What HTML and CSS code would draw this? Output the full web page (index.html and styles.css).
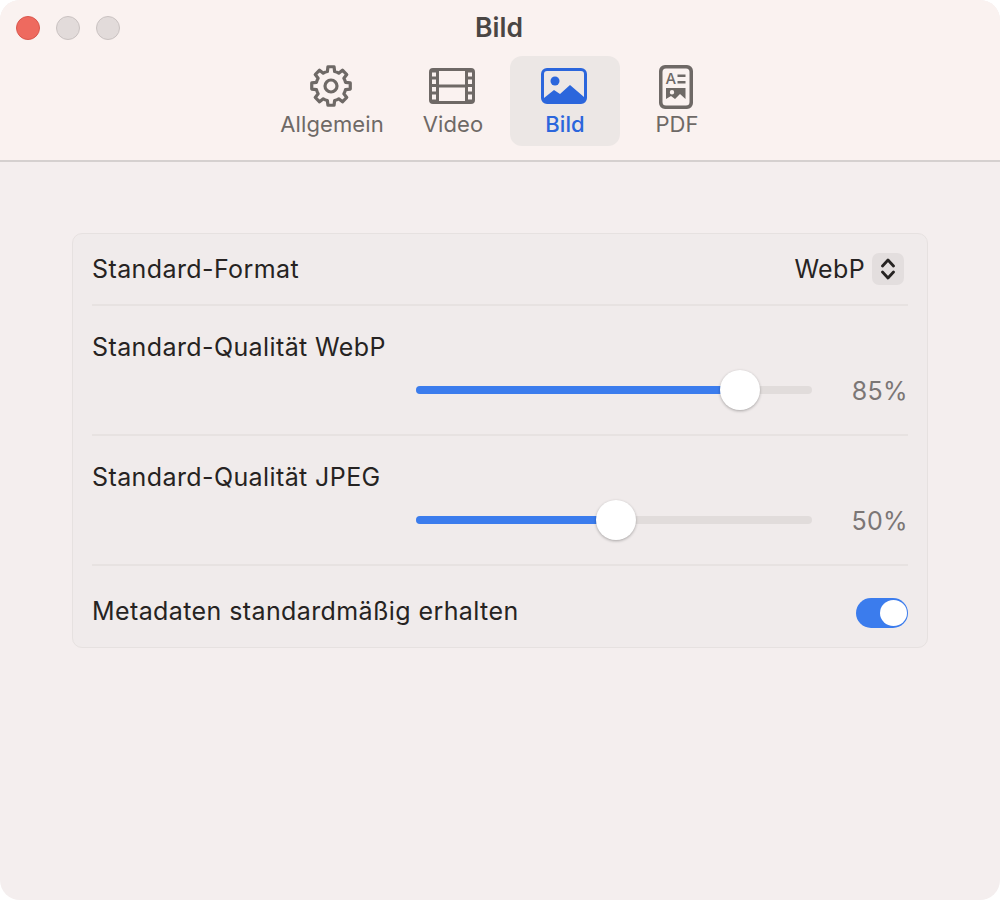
FILE: index.html
```html
<!DOCTYPE html>
<html lang="de">
<head>
    <meta charset="UTF-8">
    <meta name="viewport" content="width=device-width, initial-scale=1.0">
    <title>Bild</title>
    <link rel="stylesheet" href="styles.css">
</head>
<body>
    <div class="window">
        <header class="toolbar">
            <div class="traffic-lights">
                <span class="light light-close"></span>
                <span class="light"></span>
                <span class="light"></span>
            </div>
            <div class="window-title">Bild</div>
            <nav class="tabs">
                <div class="tab tab-general">
                    <svg class="tab-icon gear-icon" width="42" height="42" viewBox="0 0 42 42" fill="none" stroke="currentColor" stroke-width="3.200" stroke-linejoin="round">
                        <path d="M17.37 6.45L17.95 1.74L24.05 1.74L24.63 6.45A15 15 0 0 1 28.73 8.14L32.46 5.22L36.78 9.54L33.86 13.27A15 15 0 0 1 35.55 17.37L40.26 17.95L40.26 24.05L35.55 24.63A15 15 0 0 1 33.86 28.73L36.78 32.46L32.46 36.78L28.73 33.86A15 15 0 0 1 24.63 35.55L24.05 40.26L17.95 40.26L17.37 35.55A15 15 0 0 1 13.27 33.86L9.54 36.78L5.22 32.46L8.14 28.73A15 15 0 0 1 6.45 24.63L1.74 24.05L1.74 17.95L6.45 17.37A15 15 0 0 1 8.14 13.27L5.22 9.54L9.54 5.22L13.27 8.14A15 15 0 0 1 17.37 6.45Z"/>
                        <circle cx="21" cy="21" r="6"/>
                    </svg>
                    <span>Allgemein</span>
                </div>
                <div class="tab tab-video">
                    <svg class="tab-icon" width="46" height="44" viewBox="0 0 46 44" fill="currentColor">
                        <path fill-rule="evenodd" d="M4 3H42A4 4 0 0 1 46 7V35A4 4 0 0 1 42 39H4A4 4 0 0 1 0 35V7A4 4 0 0 1 4 3ZM10 6V19.500H36V6ZM10 22.500V36H36V22.500ZM3 7.500V11.500H7V7.500ZM3 14.500V19H7V14.500ZM3 22V26.500H7V22ZM3 29.500V34.500H7V29.500ZM39 7.500V11.500H43V7.500ZM39 14.500V19H43V14.500ZM39 22V26.500H43V22ZM39 29.500V34.500H43V29.500Z"/>
                    </svg>
                    <span>Video</span>
                </div>
                <div class="tab tab-active">
                    <svg class="tab-icon" width="46" height="44" viewBox="0 0 46 44" fill="currentColor">
                        <path fill-rule="evenodd" d="M6 3H40A6 6 0 0 1 46 9V33A6 6 0 0 1 40 39H6A6 6 0 0 1 0 33V9A6 6 0 0 1 6 3ZM6 6A3 3 0 0 0 3 9V33L13 25L19 29L29 20L43 32V9A3 3 0 0 0 40 6Z"/>
                        <circle cx="14" cy="16" r="4.500"/>
                    </svg>
                    <span>Bild</span>
                </div>
                <div class="tab tab-pdf">
                    <svg class="tab-icon" width="34" height="44" viewBox="0 0 34 44" fill="currentColor">
                        <path fill-rule="evenodd" d="M6 0H28A6 6 0 0 1 34 6V38A6 6 0 0 1 28 44H6A6 6 0 0 1 0 38V6A6 6 0 0 1 6 0ZM7 3.500A3.500 3.500 0 0 0 3.500 7V37A3.500 3.500 0 0 0 7 40.500H27A3.500 3.500 0 0 0 30.500 37V7A3.500 3.500 0 0 0 27 3.500Z"/>
                        <text x="6.500" y="19" class="pdf-letter">A</text>
                        <rect x="18.500" y="9.500" width="8" height="2.500"/>
                        <rect x="18.500" y="16" width="8" height="2.500"/>
                        <path fill-rule="evenodd" d="M7 23H26.500V34L21 29L16 34L12 31L7 34ZM13 25A2.200 2.200 0 1 0 13 29.400A2.200 2.200 0 1 0 13 25Z"/>
                    </svg>
                    <span>PDF</span>
                </div>
            </nav>
        </header>

        <main class="content">
            <section class="card">
                <div class="row row-simple row-format">
                    <span class="row-label">Standard-Format</span>
                    <div class="select">
                        <span>WebP</span>
                        <span class="select-stepper">
                            <svg width="14" height="24" viewBox="0 0 14 24" fill="none" stroke="currentColor" stroke-width="2.800" stroke-linecap="round" stroke-linejoin="round">
                                <path d="M1.500 9L7 3L12.500 9"/>
                                <path d="M1.500 15L7 21L12.500 15"/>
                            </svg>
                        </span>
                    </div>
                </div>
                <div class="row row-slider">
                    <span class="row-label">Standard-Qualität WebP</span>
                    <div class="slider-line">
                        <div class="slider">
                            <div class="slider-fill" style="width: 81.800%"></div>
                            <div class="slider-thumb" style="left: 81.800%"></div>
                        </div>
                        <span class="slider-value">85%</span>
                    </div>
                </div>
                <div class="row row-slider">
                    <span class="row-label">Standard-Qualität JPEG</span>
                    <div class="slider-line">
                        <div class="slider">
                            <div class="slider-fill" style="width: 50.500%"></div>
                            <div class="slider-thumb" style="left: 50.500%"></div>
                        </div>
                        <span class="slider-value">50%</span>
                    </div>
                </div>
                <div class="row row-simple row-last">
                    <span class="row-label">Metadaten standardmäßig erhalten</span>
                    <div class="toggle"><span class="toggle-knob"></span></div>
                </div>
            </section>
        </main>
    </div>
</body>
</html>
```

FILE: styles.css
```css
* { box-sizing: border-box; }
html, body { margin: 0; padding: 0; background: #fff; }
body { font-family: Inter, "Noto Sans", "Liberation Sans", sans-serif; color: #262322; }

.window { width: 1000px; height: 900px; display: flex; flex-direction: column; background: #f4eeee; border-radius: 20px; overflow: hidden; }

.toolbar { height: 162px; flex: none; position: relative; background: #faf2f0; border-bottom: 2px solid #d5d0cf; padding-top: 56px; }
.traffic-lights { position: absolute; top: 16px; left: 16px; display: flex; gap: 16px; }
.light { width: 24px; height: 24px; border-radius: 50%; background: #e2dbda; border: 1px solid #c9c2c1; }
.light-close { background: #ee6a5f; border-color: #d9574d; }
.window-title { position: absolute; top: 12px; left: 0; right: 2px; text-align: center; font-size: 26.500px; line-height: 30px; font-weight: 600; color: #4a4644; }

.tabs { display: flex; justify-content: center; padding-left: 2px; }
.tab { width: 110px; height: 90px; display: flex; flex-direction: column; align-items: center; border-radius: 12px; color: #6e6966; font-size: 22px; line-height: 26px; letter-spacing: 0.1px; padding-top: 9px; }
.tab-icon { height: 44px; margin: 0 2px 2px 0; flex: none; }
.gear-icon { height: 42px; margin-bottom: 4px; }
.tab span { white-space: nowrap; }
.tab-general { width: 128px; }
.tab-video { width: 114px; }
.tab-active { background: #ece7e5; color: #2b66dc; font-weight: 500; }
.tab-pdf { width: 114px; }
.pdf-letter { font-size: 15px; font-weight: 500; }

.content { padding: 71px 72px 0; }
.card { background: #f0ebeb; border: 1px solid #e6e1e0; border-radius: 10px; padding: 0 19px; }
.row { border-bottom: 2px solid #e7e2e1; }
.row-label { font-size: 25px; line-height: 30px; letter-spacing: 0.4px; color: #262322; }
.row-simple { display: flex; align-items: center; justify-content: space-between; }
.row-format { height: 72px; }
.row-last { height: 81px; border-bottom: none; padding-top: 8px; }
.row-slider { height: 130px; padding-top: 26px; }
.row-slider .row-label { display: block; }

.select { display: flex; align-items: center; gap: 7px; font-size: 25px; letter-spacing: 0.35px; margin-right: 4px; }
.select-stepper { width: 32px; height: 32px; display: flex; align-items: center; justify-content: center; background: #e3dede; border-radius: 7px; }

.slider-line { display: flex; align-items: center; justify-content: flex-end; margin-top: 13px; height: 30px; }
.slider { width: 396px; height: 8px; position: relative; background: #e1dcdb; border-radius: 4px; }
.slider-fill { height: 100%; background: #3b7ced; border-radius: 4px 0 0 4px; }
.slider-thumb { position: absolute; top: -16px; width: 40px; height: 40px; margin-left: -20px; background: #fff; border-radius: 50%; box-shadow: 0 1px 3px rgba(0, 0, 0, 0.3); }
.slider-value { width: 96px; padding-top: 1px; text-align: right; font-size: 25px; letter-spacing: 0.35px; color: #7b7675; }

.toggle { width: 52px; height: 30px; margin-top: 4px; background: #3b7ced; border-radius: 15px; padding: 2px 1px; display: flex; justify-content: flex-end; }
.toggle-knob { width: 27px; height: 26px; background: #fff; border-radius: 50%; }
```
